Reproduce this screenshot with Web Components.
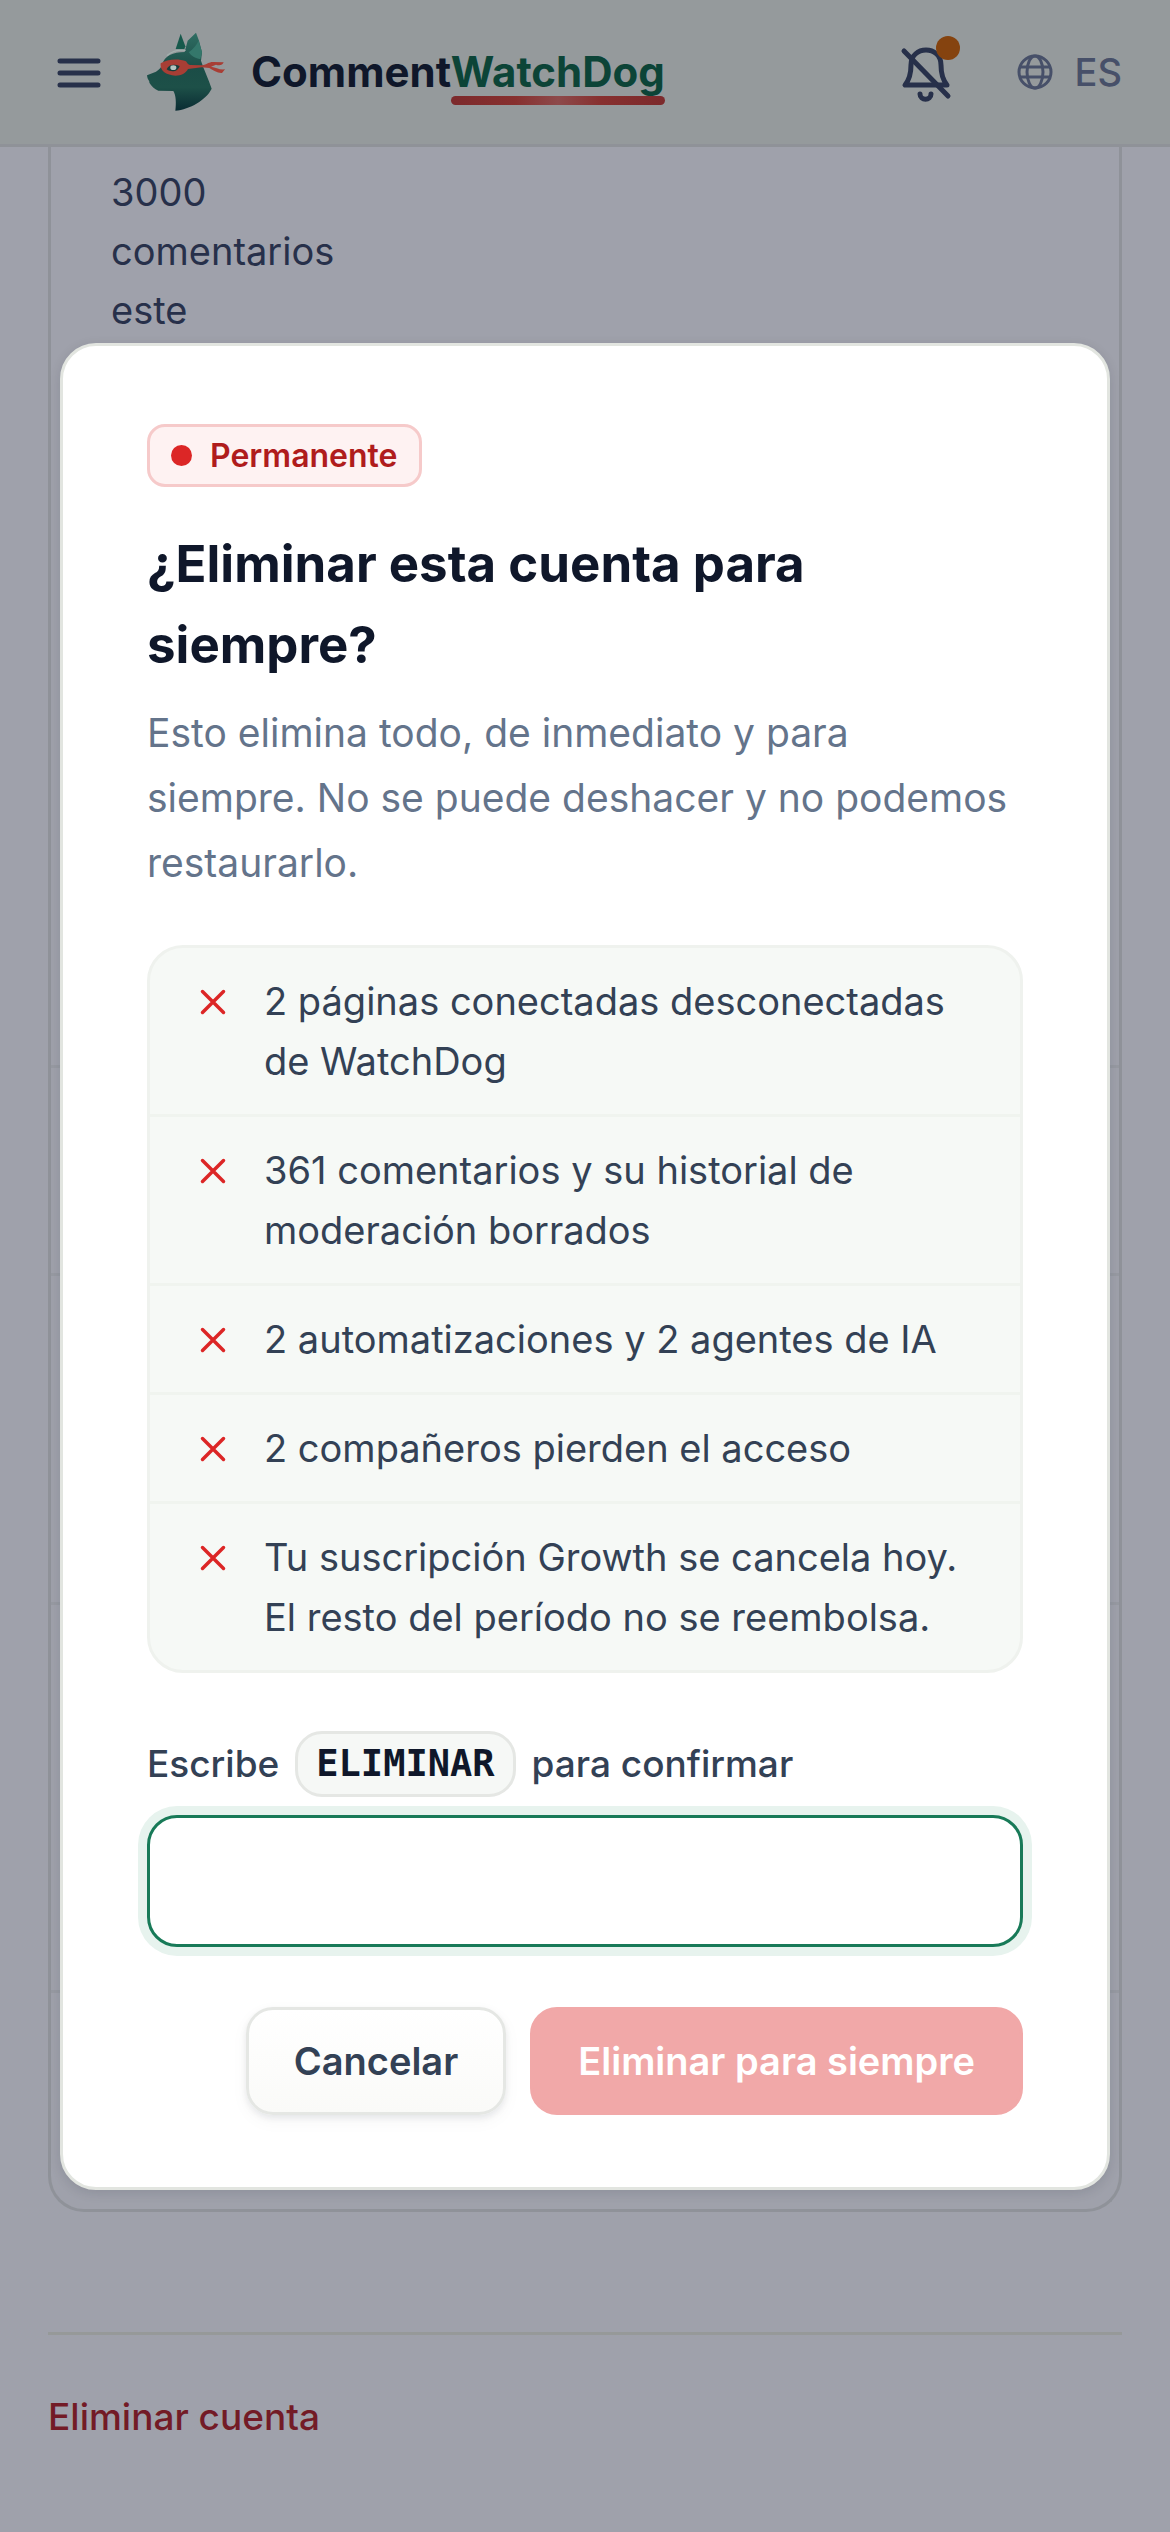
<!DOCTYPE html>
<html lang="es">
<head>
<meta charset="utf-8">
<meta name="viewport" content="width=device-width, initial-scale=1">
<title>CommentWatchDog</title>
<style>
    body {
        margin: 0;
        background: #ffffff;
        font-family: Inter, "Liberation Sans", sans-serif;
        font-size: 38px;
        color: #334155;
    }
</style>
</head>
<body>
<watchdog-app></watchdog-app>

<script>
// Barra superior: menu, logo, avisos e idioma
class AppHeader extends HTMLElement {
    constructor() {
        super();
        this.attachShadow({mode: 'open'});
    }

    get styles() {
        return `
            :host {
                display: flex;
                align-items: center;
                box-sizing: border-box;
                height: 147px;
                padding: 0 48px 0 54px;
                background: #959a9c;
                border-bottom: 3px solid #8f9298;
            }
            button {
                display: flex;
                align-items: center;
                margin: 0;
                padding: 0;
                border: 0;
                background: none;
                font: inherit;
                color: #27304a;
            }
            .brand {
                display: flex;
                align-items: center;
                gap: 22px;
                margin-left: 40px;
                font-size: 42px;
                line-height: 54px;
                font-weight: 700;
                color: #0f172a;
                text-decoration: none;
            }
            .dog {
                position: relative;
                color: #0c4437;
            }
            .dog::after {
                content: "";
                position: absolute;
                left: 0;
                right: 0;
                bottom: -8px;
                height: 9px;
                border-radius: 5px;
                background: linear-gradient(90deg, #7c2a2c, #87302f 30%, #8d4a4b 50%, #87302f 70%, #7c2a2c);
            }
            .bell {
                position: relative;
                margin-left: auto;
            }
            .bell::after {
                content: "";
                position: absolute;
                right: -5px;
                top: -6px;
                width: 24px;
                height: 24px;
                border-radius: 50%;
                background: #85430f;
            }
            .lang {
                gap: 22px;
                margin-left: 62px;
                font-weight: 500;
                color: #475069;
            }
        `;
    }

    connectedCallback() {
        this.shadowRoot.innerHTML = `
        <style>${this.styles}</style>
        <button aria-label="Menú">
            <svg width="51" height="54" viewBox="0 0 51 54" fill="none" stroke="currentColor" stroke-width="5" stroke-linecap="round"><path d="M6 16h38M6 28h38M6 40h38"/></svg>
        </button>
        <a class="brand" href="#">
            <svg width="84" height="84" viewBox="45 30 252 252">
                <defs>
                    <linearGradient id="fur" x1="0" y1="0" x2="0" y2="1">
                        <stop offset="0" stop-color="#2f6e63"/>
                        <stop offset=".45" stop-color="#1b4d47"/>
                        <stop offset=".7" stop-color="#1d5048"/>
                        <stop offset="1" stop-color="#0a2c33"/>
                    </linearGradient>
                </defs>
                <path fill="#17594c" d="M137 87 152 41 166 79 163 88Z"/>
                <path fill="url(#fur)" d="M97 132C104 108 128 96 164 96L173 62 198 38 207 62 216 97 213 122C222 150 236 178 245 206 228 240 180 268 136 272 139 250 138 225 130 213L85 212C73 207 65 198 58 188 60 183 52 180 51 166L78 155C88 148 95 142 97 132Z"/>
                <path fill="none" stroke="#a3b0ae" stroke-width="4" stroke-linecap="round" d="M112 106Q134 88 165 91"/>
                <path fill="#34776b" d="M176 97Q196 82 206 62L216 97 211 118Q188 114 176 97Z"/>
                <path fill="#a83e35" d="M92 130C110 118 145 115 168 124 172 130 174 134 180 135L215 136C232 133 238 125 250 126L281 127C278 136 268 138 258 134L243 140C258 142 267 150 285 148L276 159C262 160 250 151 238 144L215 142 174 147C165 165 140 172 115 163 98 157 90 145 92 130Z"/>
                <path fill="#163e3b" d="M110 148C116 133 134 132 149 138 146 152 127 160 110 148Z"/>
                <ellipse cx="130" cy="143" rx="9" ry="7" fill="#b5c5c1"/>
            </svg>
            <span>Comment<span class="dog">WatchDog</span></span>
        </a>
        <button class="bell" aria-label="Notificaciones">
            <svg width="60" height="60" viewBox="0 0 60 60" fill="none" stroke="currentColor" stroke-width="5" stroke-linecap="round" stroke-linejoin="round">
                <path d="M10 43H52C47 37 46 31 46 23C46 3 16 3 16 23C16 31 15 37 10 43Z"/>
                <path d="M25 52C25 59 36 59 36 52M9 9 53 54"/>
            </svg>
        </button>
        <button class="lang">
            <svg width="36" height="36" viewBox="0 0 36 36" fill="none" stroke="currentColor" stroke-width="3">
                <circle cx="18" cy="18" r="16"/><ellipse cx="18" cy="18" rx="8" ry="16"/><path d="M3 13H33M3 23H33"/>
            </svg>
            <span>ES</span>
        </button>
        `;
    }
}

// Pagina de cuenta que queda detras del dialogo
class AccountPage extends HTMLElement {
    constructor() {
        super();
        this.attachShadow({mode: 'open'});
    }

    get styles() {
        return `
            :host {
                display: block;
                padding: 0 48px 72px;
                color: #27304a;
            }
            .card {
                border: 3px solid #8f9299;
                border-top: 0;
                border-radius: 0 0 36px 36px;
            }
            section {
                box-sizing: border-box;
                height: 208px;
                border-bottom: 3px solid #979aa2;
            }
            section.first {
                height: 921px;
                padding: 16px 60px;
                line-height: 59px;
            }
            section.tall { height: 329px; }
            section.taller { height: 388px; }
            section:last-child { height: 216px; border: 0; }
            p { width: 240px; margin: 0; }
            footer {
                margin-top: 120px;
                padding-top: 58px;
                border-top: 3px solid #969999;
            }
            a {
                font-size: 37px;
                line-height: 45px;
                font-weight: 500;
                color: #731b26;
                text-decoration: none;
            }
        `;
    }

    connectedCallback() {
        this.shadowRoot.innerHTML = `
        <style>${this.styles}</style>
        <div class="card">
            <section class="first"><p>3000 comentarios este</p></section>
            <section></section>
            <section class="tall"></section>
            <section class="taller"></section>
            <section></section>
        </div>
        <footer><a href="#">Eliminar cuenta</a></footer>
        `;
    }
}

// Fila de la lista con lo que se pierde
class LossItem extends HTMLElement {
    constructor() {
        super();
        this.attachShadow({mode: 'open'});
    }

    get styles() {
        return `
            :host {
                display: flex;
                gap: 30px;
                padding: 23px 36px 23px 42px;
                line-height: 60px;
                border-top: 3px solid #f0f4ef;
            }
            :host(:first-of-type) { border-top: 0; }
            svg { flex: none; margin-top: 10px; }
        `;
    }

    connectedCallback() {
        this.setAttribute('role', 'listitem');
        this.shadowRoot.innerHTML = `
        <style>${this.styles}</style>
        <svg width="42" height="42" viewBox="0 0 24 24" fill="none" stroke="#dc2626" stroke-width="2" stroke-linecap="round"><path d="M6 6l12 12M18 6L6 18"/></svg>
        <span><slot></slot></span>
        `;
    }
}

// Boton del dialogo: kind="danger" para el rojo
class DialogButton extends HTMLElement {
    constructor() {
        super();
        this.attachShadow({mode: 'open'});
    }

    get styles() {
        return `
            :host { display: block; }
            button {
                box-sizing: border-box;
                height: 108px;
                padding: 0 45px;
                border: 3px solid #e5e7e4;
                border-radius: 27px;
                background: linear-gradient(#ffffff, #fafaf8);
                box-shadow: 0 3px 6px rgba(15, 23, 42, 0.08), 0 6px 18px rgba(15, 23, 42, 0.04);
                font: inherit;
                font-weight: 600;
                color: #334155;
            }
            .danger {
                border-color: #f1a8a8;
                background: #f1a8a8;
                box-shadow: none;
                color: #ffffff;
            }
        `;
    }

    connectedCallback() {
        const kind = this.getAttribute('kind') || 'plain';
        const disabled = this.hasAttribute('disabled') ? 'disabled' : '';
        this.shadowRoot.innerHTML = `
        <style>${this.styles}</style>
        <button class="${kind}" ${disabled}><slot></slot></button>
        `;
    }
}

// Dialogo de confirmacion
class DeleteDialog extends HTMLElement {
    constructor() {
        super();
        this.attachShadow({mode: 'open'});
    }

    get styles() {
        return `
            :host {
                display: block;
                box-sizing: border-box;
                padding: 78px 84px 72px;
                border: 3px solid #e2e5e0;
                border-radius: 36px;
                background: #ffffff;
                box-shadow: 0 3px 12px rgba(15, 23, 42, 0.12);
            }
            .badge {
                display: flex;
                align-items: center;
                gap: 18px;
                box-sizing: border-box;
                width: fit-content;
                height: 63px;
                padding: 0 21px;
                border: 3px solid #f6caca;
                border-radius: 18px;
                background: #fef2f2;
                font-size: 32px;
                font-weight: 600;
                color: #b01c1c;
            }
            .badge::before {
                content: "";
                width: 21px;
                height: 21px;
                border-radius: 50%;
                background: #dc2626;
            }
            h1 {
                margin: 36px 0 15px;
                font-size: 51px;
                line-height: 81px;
                font-weight: 700;
                color: #0f172a;
            }
            p {
                margin: 0 0 50px;
                font-size: 39px;
                line-height: 65px;
                color: #64748b;
            }
            .list {
                border: 3px solid #eff2ee;
                border-radius: 36px;
                background: #f6f9f6;
            }
            label {
                display: flex;
                align-items: center;
                gap: 16px;
                margin: 58px 0 18px;
                font-size: 37px;
                font-weight: 500;
            }
            code {
                box-sizing: border-box;
                height: 66px;
                padding: 0 18px;
                border: 3px solid #e5e7e4;
                border-radius: 27px;
                background: #f6f8f6;
                font: 700 37px/60px "DejaVu Sans Mono", monospace;
                color: #0f172a;
            }
            input {
                display: block;
                box-sizing: border-box;
                width: 100%;
                height: 132px;
                padding: 0 36px;
                border: 3px solid #187a58;
                border-radius: 30px;
                outline: 0;
                background: #ffffff;
                box-shadow: 0 0 0 9px #e7f3ee;
                font: inherit;
            }
            .actions {
                display: flex;
                justify-content: flex-end;
                gap: 24px;
                margin-top: 60px;
            }
        `;
    }

    connectedCallback() {
        this.setAttribute('role', 'dialog');
        this.shadowRoot.innerHTML = `
        <style>${this.styles}</style>
        <div class="badge">Permanente</div>
        <h1>¿Eliminar esta cuenta para siempre?</h1>
        <p>Esto elimina todo, de inmediato y para<br>siempre. No se puede deshacer y no podemos restaurarlo.</p>
        <div class="list" role="list">
            <loss-item>2 páginas conectadas desconectadas de WatchDog</loss-item>
            <loss-item>361 comentarios y su historial de moderación borrados</loss-item>
            <loss-item>2 automatizaciones y 2 agentes de IA</loss-item>
            <loss-item>2 compañeros pierden el acceso</loss-item>
            <loss-item>Tu suscripción Growth se cancela hoy. El resto del período no se reembolsa.</loss-item>
        </div>
        <label for="confirm">Escribe <code>ELIMINAR</code> para confirmar</label>
        <input id="confirm" type="text" autocomplete="off">
        <div class="actions">
            <dialog-button>Cancelar</dialog-button>
            <dialog-button kind="danger" disabled>Eliminar para siempre</dialog-button>
        </div>
        `;
    }
}

// Une la pagina y el dialogo que la tapa
class WatchdogApp extends HTMLElement {
    constructor() {
        super();
        this.attachShadow({mode: 'open'});
    }

    get styles() {
        return `
            :host {
                display: block;
                position: relative;
                min-height: 100vh;
                background: #9fa1ab;
            }
            .overlay {
                position: absolute;
                inset: 0;
                display: flex;
                align-items: center;
                padding: 0 60px;
            }
            delete-dialog { flex: 1; }
        `;
    }

    connectedCallback() {
        this.shadowRoot.innerHTML = `
        <style>${this.styles}</style>
        <app-header></app-header>
        <account-page></account-page>
        <div class="overlay"><delete-dialog></delete-dialog></div>
        `;
    }
}

customElements.define('app-header', AppHeader);
customElements.define('account-page', AccountPage);
customElements.define('loss-item', LossItem);
customElements.define('dialog-button', DialogButton);
customElements.define('delete-dialog', DeleteDialog);
customElements.define('watchdog-app', WatchdogApp);
</script>
</body>
</html>
